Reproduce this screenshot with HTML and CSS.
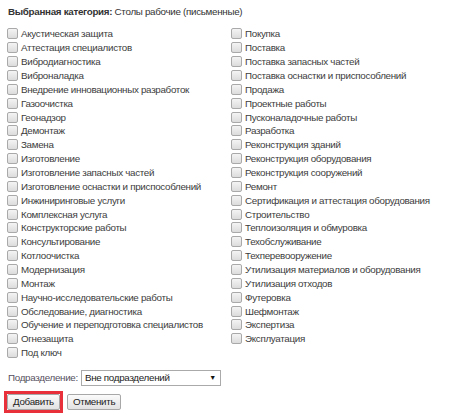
FILE: index.html
```html
<!DOCTYPE html>
<html lang="ru">
<head>
<meta charset="utf-8">
<link rel="stylesheet" href="styles.css">
</head>
<body>
<div class="page">
  <div class="title"><b>Выбранная категория:</b> Столы рабочие (письменные)</div>
  <div class="cols">
    <ul class="col">
      <li><span class="cb"></span>Акустическая защита</li>
      <li><span class="cb"></span>Аттестация специалистов</li>
      <li><span class="cb"></span>Вибродиагностика</li>
      <li><span class="cb"></span>Виброналадка</li>
      <li><span class="cb"></span>Внедрение инновационных разработок</li>
      <li><span class="cb"></span>Газоочистка</li>
      <li><span class="cb"></span>Геонадзор</li>
      <li><span class="cb"></span>Демонтаж</li>
      <li><span class="cb"></span>Замена</li>
      <li><span class="cb"></span>Изготовление</li>
      <li><span class="cb"></span>Изготовление запасных частей</li>
      <li><span class="cb"></span>Изготовление оснастки и приспособлений</li>
      <li><span class="cb"></span>Инжиниринговые услуги</li>
      <li><span class="cb"></span>Комплексная услуга</li>
      <li><span class="cb"></span>Конструкторские работы</li>
      <li><span class="cb"></span>Консультирование</li>
      <li><span class="cb"></span>Котлоочистка</li>
      <li><span class="cb"></span>Модернизация</li>
      <li><span class="cb"></span>Монтаж</li>
      <li><span class="cb"></span>Научно-исследовательские работы</li>
      <li><span class="cb"></span>Обследование, диагностика</li>
      <li><span class="cb"></span>Обучение и переподготовка специалистов</li>
      <li><span class="cb"></span>Огнезащита</li>
      <li><span class="cb"></span>Под ключ</li>
    </ul>
    <ul class="col">
      <li><span class="cb"></span>Покупка</li>
      <li><span class="cb"></span>Поставка</li>
      <li><span class="cb"></span>Поставка запасных частей</li>
      <li><span class="cb"></span>Поставка оснастки и приспособлений</li>
      <li><span class="cb"></span>Продажа</li>
      <li><span class="cb"></span>Проектные работы</li>
      <li><span class="cb"></span>Пусконаладочные работы</li>
      <li><span class="cb"></span>Разработка</li>
      <li><span class="cb"></span>Реконструкция зданий</li>
      <li><span class="cb"></span>Реконструкция оборудования</li>
      <li><span class="cb"></span>Реконструкция сооружений</li>
      <li><span class="cb"></span>Ремонт</li>
      <li><span class="cb"></span>Сертификация и аттестация оборудования</li>
      <li><span class="cb"></span>Строительство</li>
      <li><span class="cb"></span>Теплоизоляция и обмуровка</li>
      <li><span class="cb"></span>Техобслуживание</li>
      <li><span class="cb"></span>Техперевооружение</li>
      <li><span class="cb"></span>Утилизация материалов и оборудования</li>
      <li><span class="cb"></span>Утилизация отходов</li>
      <li><span class="cb"></span>Футеровка</li>
      <li><span class="cb"></span>Шефмонтаж</li>
      <li><span class="cb"></span>Экспертиза</li>
      <li><span class="cb"></span>Эксплуатация</li>
    </ul>
  </div>
  <div class="sub">
    <span class="sub-label">Подразделение:</span>
    <span class="select"><span>Вне подразделений</span><span class="arrow">▼</span></span>
  </div>
  <div class="actions">
    <span class="highlight"><span class="btn">Добавить</span></span>
    <span class="btn">Отменить</span>
  </div>
</div>
</body>
</html>
```

FILE: styles.css
```css
html, body {
  margin: 0;
  padding: 0;
  background: #ffffff;
}
body {
  font-family: "Liberation Sans", Arial, sans-serif;
  font-size: 9.8px;
  letter-spacing: -0.3px;
  color: #3a3a3a;
}
.page {
  padding: 5px 0 0 8px;
  width: 442px;
  box-sizing: border-box;
}
.title {
  line-height: 14px;
  height: 14px;
  color: #333;
}
.title b {
  color: #333;
}
.cols {
  display: grid;
  grid-template-columns: 224px 1fr;
  margin-top: 8px;
  margin-left: -1px;
}
.col {
  list-style: none;
  margin: 0;
  padding: 0;
}
.col li {
  display: flex;
  align-items: center;
  height: 13.87px;
  white-space: nowrap;
  color: #3c3c3c;
}
.cb {
  width: 9px;
  height: 9px;
  border: 1px solid #a9a9a9;
  border-radius: 2px;
  background: linear-gradient(#f4f4f4, #dcdcdc);
  margin-right: 3px;
  flex: none;
}
.sub {
  display: flex;
  align-items: center;
  margin-top: 10px;
  height: 16px;
}
.sub-label {
  color: #555060;
  margin-right: 3px;
}
.select {
  display: flex;
  align-items: center;
  justify-content: space-between;
  height: 14px;
  border: 1px solid #aaaaaa;
  padding: 0 4px 0 3px;
  color: #222;
  width: 131px;
}
.arrow {
  font-size: 7px;
  color: #111;
}
.actions {
  display: flex;
  align-items: center;
  margin-top: 5px;
  margin-left: -4px;
  gap: 4px;
}
.highlight {
  display: inline-flex;
  border: 3px solid #e8303a;
  padding: 0;
}
.btn {
  display: inline-flex;
  align-items: center;
  justify-content: center;
  height: 14px;
  padding: 0 5px;
  border: 1px solid #a8a8a8;
  border-radius: 2px;
  background: linear-gradient(#fbfbfb, #e2e2e2);
  color: #222;
}
```
